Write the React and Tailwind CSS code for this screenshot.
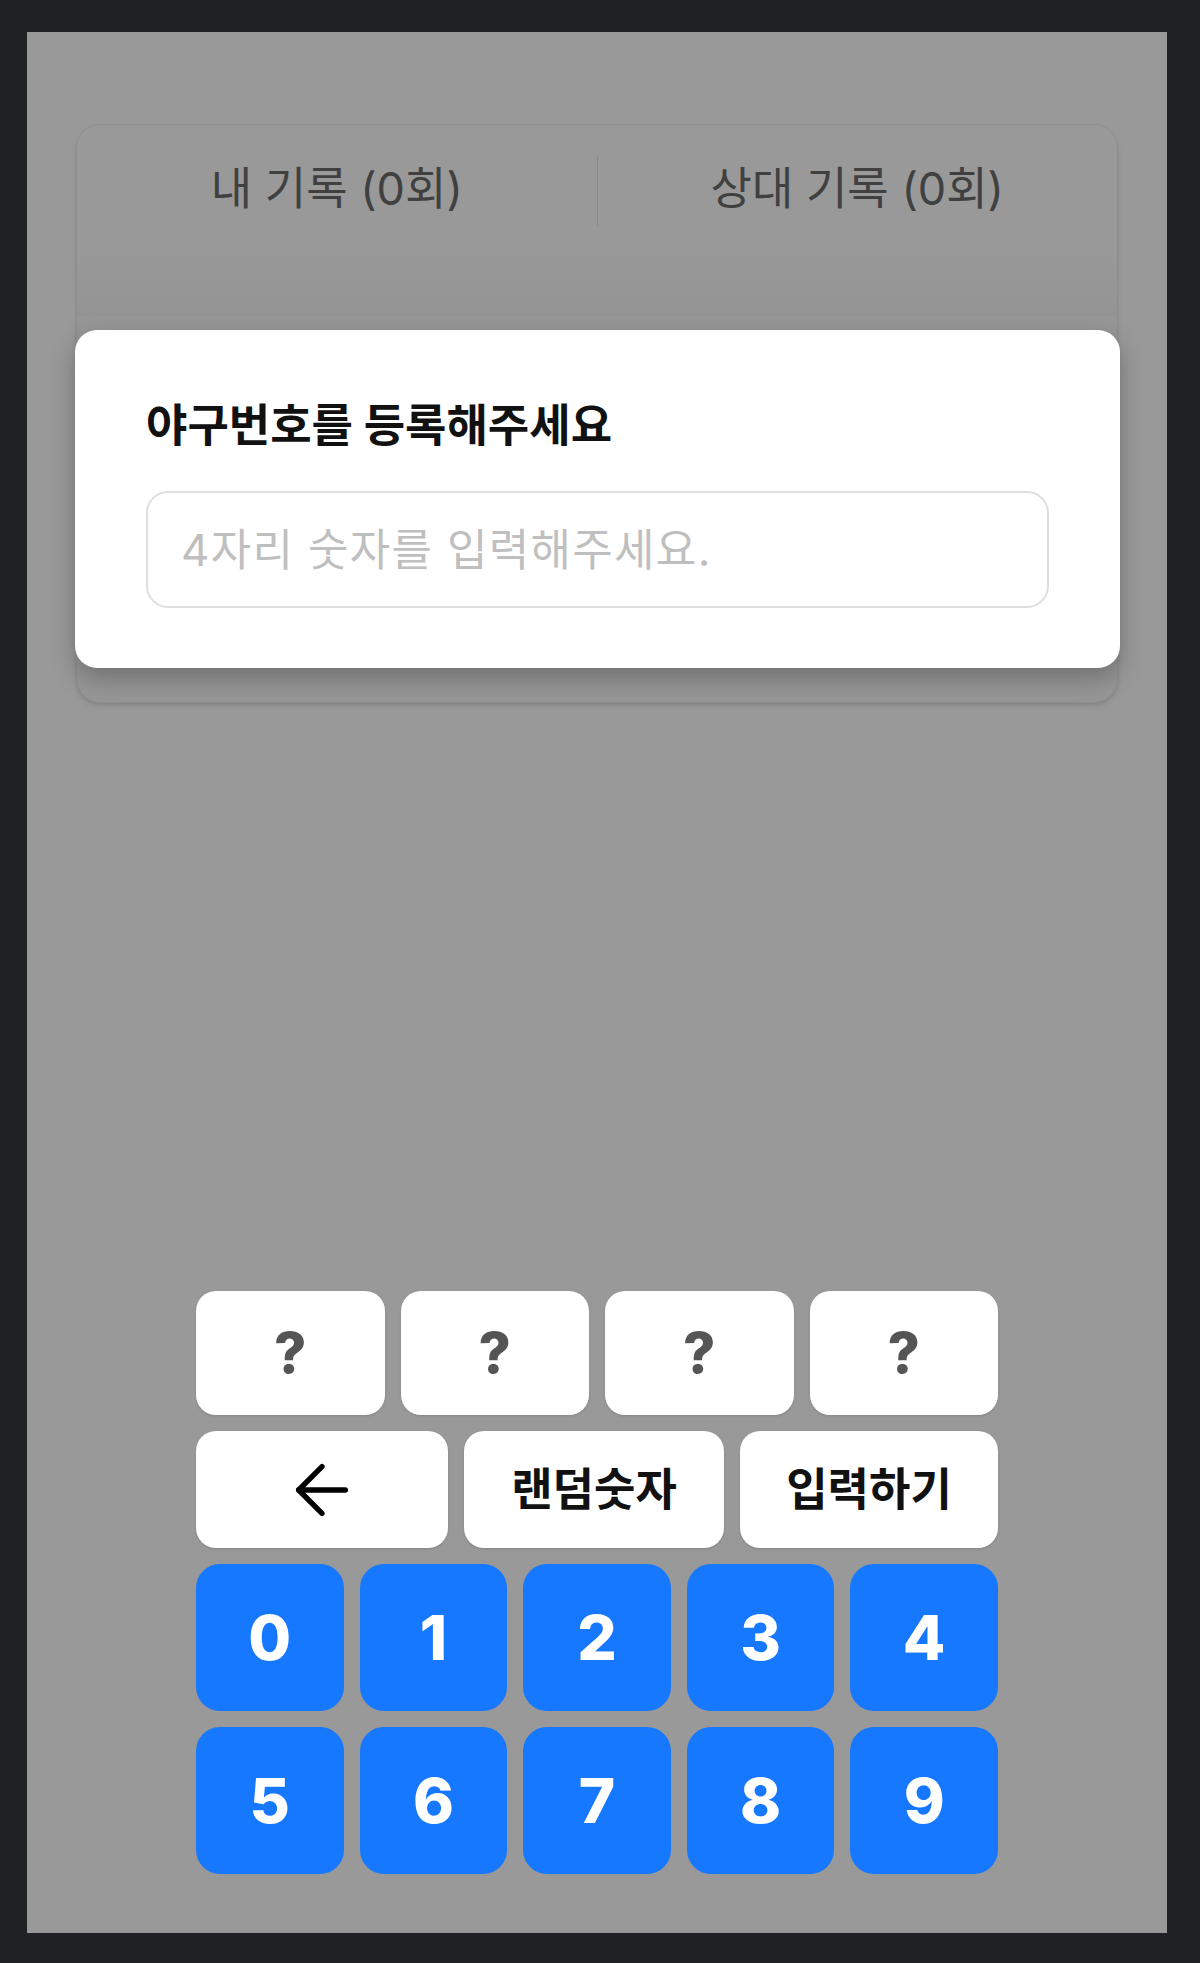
import React, { useState } from 'react'
import { ArrowLeft } from 'lucide-react'

const font = { fontFamily: 'Inter, "Noto Sans CJK KR", sans-serif' }

export default function App() {
  const [value, setValue] = useState('')
  const slots = [0, 1, 2, 3].map(i => value[i] ?? '?')

  const press = d => setValue(v => (v.length < 4 && !v.includes(d) ? v + d : v))
  const back = () => setValue(v => v.slice(0, -1))
  const random = () => {
    const pool = '0123456789'.split('').sort(() => Math.random() - 0.5)
    setValue(pool.slice(0, 4).join(''))
  }

  return (
    <div className="min-h-screen bg-[#202124] pt-[32px] pl-[27px] pr-[33px] pb-[30px]" style={font}>
      <div className="relative flex h-[1901px] flex-col overflow-hidden bg-white">
        {/* records card */}
        <div className="px-[49px] pt-[92px]">
          <div className="h-[579px] overflow-hidden rounded-[24px] border border-[#ececec] bg-[#fbfbfb] shadow-md">
            <div className="flex h-[131px] items-center bg-white">
              <div className="flex-1 pb-[4px] text-center text-[45px] text-[#6c6c6c]">내 기록 (0회)</div>
              <div className="h-[70px] w-px bg-[#e4e4e4]" />
              <div className="flex-1 pb-[4px] text-center text-[45px] text-[#6c6c6c]">상대 기록 (0회)</div>
            </div>
            <div className="h-[60px] bg-gradient-to-b from-white to-[#f6f6f6]" />
          </div>
        </div>

        <div className="absolute inset-0 bg-black/40" />

        {/* register modal */}
        <div className="absolute left-[48px] right-[47px] top-[298px] z-10 rounded-[22px] bg-white px-[71px] pb-[60px] pt-[64px] shadow-[0_10px_24px_rgba(0,0,0,0.25)]">
          <h2 className="text-[45px] font-bold leading-[64px] text-[#111]">야구번호를 등록해주세요</h2>
          <input
            value={value}
            readOnly
            placeholder="4자리 숫자를 입력해주세요."
            className="mt-[33px] block h-[117px] w-full rounded-[22px] border-2 border-[#dedede] px-[33px] text-[44px] tracking-[1.3px] text-[#222] outline-none placeholder:text-[#bfbfbf]"
            style={font}
          />
        </div>

        <div className="flex-1" />

        {/* keypad */}
        <div className="relative z-10 mx-auto flex w-[802px] flex-col gap-[16px] pb-[59px]">
          <div className="grid grid-cols-4 gap-[16px]">
            {slots.map((s, i) => (
              <div key={i} className="flex h-[124px] items-center justify-center rounded-[20px] bg-white text-[56px] font-extrabold text-[#555] shadow-sm">
                {s}
              </div>
            ))}
          </div>
          <div className="flex gap-[16px]">
            <button onClick={back} className="flex h-[117px] w-[252px] items-center justify-center rounded-[20px] bg-white text-black shadow-sm">
              <ArrowLeft size={80} strokeWidth={1.6} />
            </button>
            <button onClick={random} className="flex h-[117px] w-[260px] items-center justify-center rounded-[20px] bg-white text-[45px] font-bold text-[#111] shadow-sm">
              랜덤숫자
            </button>
            <button className="flex h-[117px] flex-1 items-center justify-center rounded-[20px] bg-white text-[45px] font-bold text-[#111] shadow-sm">
              입력하기
            </button>
          </div>
          <div className="grid grid-cols-5 gap-[16px]">
            {['0', '1', '2', '3', '4', '5', '6', '7', '8', '9'].map(d => (
              <button key={d} onClick={() => press(d)} className="flex h-[147px] items-center justify-center rounded-[24px] bg-[#1677ff] text-[62px] font-extrabold text-white">
                {d}
              </button>
            ))}
          </div>
        </div>
      </div>
    </div>
  )
}
